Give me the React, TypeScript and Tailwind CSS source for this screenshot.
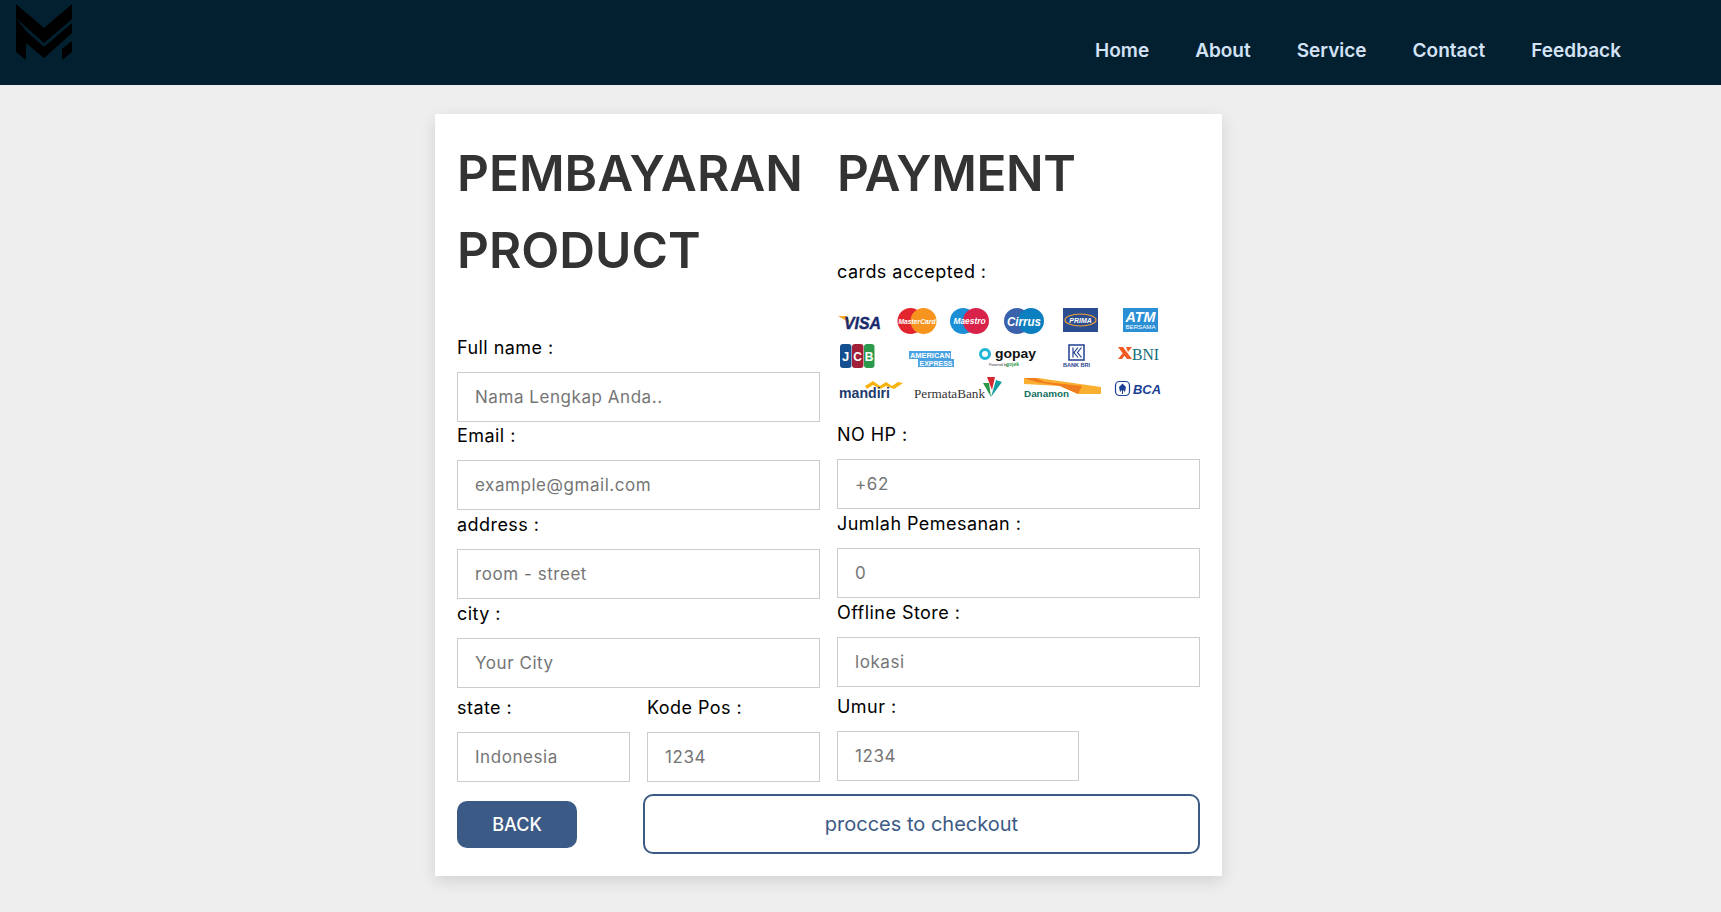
const NAV = ["Home", "About", "Service", "Contact", "Feedback"];

const Logo = () => (
  <svg width="90" height="70" viewBox="0 0 90 70" className="block self-start">
    <polygon points="16,4 44,28 72,4 72,19 44,43 26,27 16,18" fill="#000" />
    <polygon points="16,18 26,31 44,47 72,23 72,33 44,58 26,43 26,60 16,52" fill="#000" />
    <polygon points="72,41 72,52 62,60 62,49" fill="#000" />
  </svg>
);

const CardsAccepted = () => (
  <svg width="330" height="95" viewBox="15 15 330 95" className="block" fontFamily="'Liberation Sans', sans-serif">
    {/* row 1 */}
    <path d="M18 26 L27 26 L30 33 Z" fill="#f5a623" />
    <text x="24" y="38.5" fontSize="16" fontWeight="700" fontStyle="italic" fill="#1a2a6c" stroke="#1a2a6c" strokeWidth="0.4" textLength="37" lengthAdjust="spacingAndGlyphs">VISA</text>

    <circle cx="90.5" cy="31" r="13" fill="#e3262e" />
    <circle cx="103.5" cy="31" r="13" fill="#f7941e" />
    <text x="97" y="34" fontSize="8" fontStyle="italic" fontWeight="700" fill="#fff" textAnchor="middle" textLength="37" lengthAdjust="spacingAndGlyphs">MasterCard</text>

    <circle cx="143" cy="31" r="13" fill="#1b8fd6" />
    <circle cx="156" cy="31" r="13" fill="#d9224a" />
    <text x="149.5" y="34" fontSize="8.5" fontStyle="italic" fontWeight="700" fill="#fff" textAnchor="middle" textLength="32" lengthAdjust="spacingAndGlyphs">Maestro</text>

    <circle cx="197" cy="31" r="13" fill="#3a62ac" />
    <circle cx="211" cy="31" r="13" fill="#0b7fc0" />
    <text x="204" y="35.5" fontSize="12" fontStyle="italic" fontWeight="700" fill="#fff" textAnchor="middle" textLength="34" lengthAdjust="spacingAndGlyphs">Cirrus</text>

    <rect x="243" y="18" width="35" height="24" fill="#2a4d8f" />
    <ellipse cx="260.5" cy="30" rx="15.5" ry="6" fill="none" stroke="#f0a035" strokeWidth="1.2" />
    <text x="260.5" y="32.5" fontSize="7" fontStyle="italic" fontWeight="700" fill="#fff" textAnchor="middle">PRIMA</text>

    <rect x="303" y="18" width="35" height="24" fill="#2b8fd6" />
    <text x="320.5" y="32" fontSize="14" fontStyle="italic" fontWeight="700" fill="#fff" textAnchor="middle" textLength="30" lengthAdjust="spacingAndGlyphs">ATM</text>
    <text x="320.5" y="39" fontSize="5" fill="#fff" textAnchor="middle" textLength="30" lengthAdjust="spacingAndGlyphs">BERSAMA</text>

    {/* row 2 */}
    <rect x="20" y="54" width="11.5" height="24" rx="3" fill="#14508f" />
    <rect x="32" y="54" width="11.5" height="24" rx="3" fill="#a11f38" />
    <rect x="44" y="54" width="10.5" height="24" rx="3" fill="#2a9a4a" />
    <text x="25.5" y="71" fontSize="13" fontWeight="700" fill="#fff" textAnchor="middle">J</text>
    <text x="37.7" y="71" fontSize="12" fontWeight="700" fill="#fff" textAnchor="middle">C</text>
    <text x="49.2" y="71" fontSize="12" fontWeight="700" fill="#fff" textAnchor="middle">B</text>

    <rect x="89" y="61" width="42" height="8" fill="#4aa3e0" />
    <rect x="98" y="69" width="36" height="8" fill="#4aa3e0" />
    <text x="110" y="67.8" fontSize="7" fontWeight="700" fill="#fff" textAnchor="middle" textLength="40" lengthAdjust="spacingAndGlyphs">AMERICAN</text>
    <text x="116" y="75.8" fontSize="7" fontWeight="700" fill="#fff" textAnchor="middle" textLength="33" lengthAdjust="spacingAndGlyphs">EXPRESS</text>

    <circle cx="165" cy="64" r="4.5" fill="#fff" stroke="#1fb6d8" strokeWidth="3" />
    <text x="175" y="68" fontSize="13.5" fontWeight="700" fill="#111" textLength="41" lengthAdjust="spacingAndGlyphs">gopay</text>
    <text x="169" y="76" fontSize="3.5" fill="#333">Powered by</text>
    <text x="186" y="76" fontSize="5" fontWeight="700" fill="#2a9a4a">gojek</text>

    <rect x="249" y="55" width="15" height="15" fill="none" stroke="#1f3f8f" strokeWidth="1.5" />
    <path d="M253 57.5 V67.5 M258 57.5 L254 62.5 L258 67.5 M261.5 57.5 L257.5 62.5 L261.5 67.5" fill="none" stroke="#1f3f8f" strokeWidth="1.2" />
    <text x="256.5" y="76.5" fontSize="4.8" fontWeight="700" fill="#1f3f8f" textAnchor="middle" textLength="27" lengthAdjust="spacingAndGlyphs">BANK BRI</text>

    <path d="M298 57 H303 L312 69 H307 Z M298 69 L303 63 L305 65 L302 69 Z M306 57 H312 L308 62 Z" fill="#f05a22" />
    <text x="312" y="69.5" fontSize="17" fontFamily="'Liberation Serif', serif" fill="#0c6d78" textLength="27" lengthAdjust="spacingAndGlyphs">BNI</text>

    {/* row 3 */}
    <path d="M45 96 L53 91 L60 96 L66 92 L72 96 L78 92 L83 93 L74 99 L66 96 L60 99 L53 95 L47 99 Z" fill="#f9b310" />
    <text x="19" y="108" fontSize="14" fontWeight="700" fill="#1d3a6d" textLength="51" lengthAdjust="spacingAndGlyphs">mandiri</text>

    <text x="94" y="107.5" fontSize="12" fontFamily="'Liberation Serif', serif" fill="#333" textLength="71" lengthAdjust="spacingAndGlyphs">PermataBank</text>
    <path d="M167 87 L175 87 L172 100 Z" fill="#d8262e" />
    <path d="M163 93 L169 93 L171 107 Z" fill="#2a9a4a" />
    <path d="M182 92 L176 90 L171 107 Z" fill="#14a0a0" />

    <path d="M204 88 L218 88 L281 97 V104 L258 104 L240 96 L204 94 Z" fill="#f9b031" />
    <path d="M204 88 L216 92 L240 96 L258 104 L262 96 L225 92 L216 88 Z" fill="#ef7c1f" />
    <text x="204" y="106.5" fontSize="9" fontWeight="700" fill="#0f6f5c" textLength="45" lengthAdjust="spacingAndGlyphs">Danamon</text>

    <rect x="295.5" y="91.5" width="14" height="14" rx="4" fill="none" stroke="#1a3f95" strokeWidth="1.2" />
    <path d="M302.5 93.5 L306 97 L305 102 L303 100 V104 H302 V100 L300 102 L299 97 Z" fill="#1a3f95" />
    <text x="313" y="103.5" fontSize="13" fontStyle="italic" fontWeight="700" fill="#1a3f95" textLength="28" lengthAdjust="spacingAndGlyphs">BCA</text>
  </svg>
);

interface IFieldProps {
  label: string;
  placeholder: string;
  className?: string;
}

const Field = ({ label, placeholder, className = "" }: IFieldProps) => (
  <div className={className}>
    <label className="mb-[10px] block h-[29px] text-[18px] leading-[29px] tracking-[0.45px] text-black">
      {label}
    </label>
    <input
      placeholder={placeholder}
      className="block h-[50px] w-full border border-[#ccc] bg-white px-[17px] text-[17px] tracking-[0.55px] outline-none placeholder:text-[#757575]"
    />
  </div>
);

export default function App() {
  return (
    <div className="min-h-[912px] bg-[#eee] font-['Inter',sans-serif]">
      <header className="flex h-[85px] items-center justify-between bg-[#032031] pr-[100px]">
        <Logo />
        <nav className="mt-[17px] flex gap-[46px] text-[19px] font-semibold text-[#d3e2f5]">
          {NAV.map((item) => (
            <a key={item} className="cursor-pointer">
              {item}
            </a>
          ))}
        </nav>
      </header>

      <main className="ml-[435px] mt-[29px] w-[787px] bg-white px-[22px] pb-[22px] pt-[21px] shadow-[0_5px_15px_rgba(0,0,0,0.12)]">
        <div className="flex gap-[17px]">
          <div className="w-[363px]">
            <h1 className="mb-[44px] text-[49.5px] font-semibold leading-[76.8px] text-[#333]">
              PEMBAYARAN PRODUCT
            </h1>
            <Field label="Full name :" placeholder="Nama Lengkap Anda.." />
            <Field label="Email :" placeholder="example@gmail.com" className="-mt-px" />
            <Field label="address :" placeholder="room - street" />
            <Field label="city :" placeholder="Your City" />
            <div className="mt-[5px] flex gap-[17px]">
              <Field label="state :" placeholder="Indonesia" className="flex-1" />
              <Field label="Kode Pos :" placeholder="1234" className="flex-1" />
            </div>
          </div>

          <div className="w-[363px]">
            <h1 className="h-[76.8px] text-[49.5px] font-semibold leading-[76.8px] tracking-[-0.4px] text-[#333]">
              PAYMENT
            </h1>
            <label className="mt-[45px] block h-[29px] text-[18px] leading-[29px] tracking-[0.45px] text-black">
              cards accepted :
            </label>
            <div className="mb-[20px] ml-[-2px] mt-[19px]">
              <CardsAccepted />
            </div>
            <Field label="NO HP :" placeholder="+62" />
            <Field label="Jumlah Pemesanan :" placeholder="0" />
            <Field label="Offline Store :" placeholder="lokasi" />
            <Field label="Umur :" placeholder="1234" className="mt-[5px] w-[242px]" />
          </div>
        </div>

        <div className="mt-[12px] flex items-center gap-[66px]">
          <button className="mt-[2px] h-[47px] w-[120px] rounded-[10px] bg-[#3b5a85] text-[18px] font-medium text-white">
            BACK
          </button>
          <button className="h-[60px] w-[557px] rounded-[10px] border-2 border-[#3b5a85] bg-white text-[20px] text-[#3b5a85]">
            procces to checkout
          </button>
        </div>
      </main>
    </div>
  );
}
